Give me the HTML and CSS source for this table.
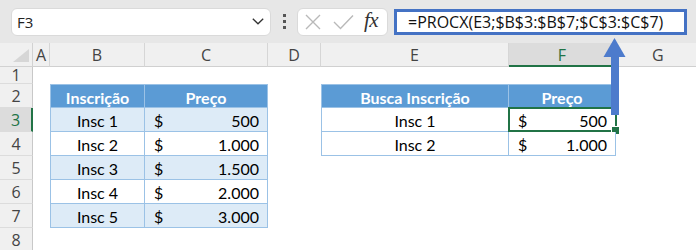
FILE: index.html
```html
<!DOCTYPE html>
<html lang="pt-BR">
<head>
<meta charset="utf-8">
<title>PROCX</title>
<link rel="stylesheet" href="styles.css">
</head>
<body>
<div class="app">
  <div class="formula-bar">
    <div class="name-box">
      <span class="name-ref">F3</span>
      <svg class="chevron" width="12" height="7" viewBox="0 0 12 7"><path d="M0.8 0.8 L6 5.8 L11.2 0.8" fill="none" stroke="#333" stroke-width="1.3"/></svg>
    </div>
    <div class="grip"><i></i><i></i><i></i></div>
    <div class="fx-buttons">
      <svg class="btn-icon" width="16" height="16" viewBox="0 0 16 16"><path d="M1 1 L15 15 M15 1 L1 15" stroke="#b9b9b9" stroke-width="1.4" fill="none"/></svg>
      <svg class="btn-icon" width="21" height="16" viewBox="0 0 21 16"><path d="M1 8 L7.5 14.5 L20 1.5" stroke="#b9b9b9" stroke-width="1.4" fill="none"/></svg>
      <span class="fx">fx</span>
    </div>
    <div class="formula">=PROCX(E3;$B$3:$B$7;$C$3:$C$7)</div>
  </div>

  <div class="sheet">
    <!-- column headers -->
    <div class="corner"><svg width="16" height="13" viewBox="0 0 16 13"><path d="M16 0 L16 13 L0 13 Z" fill="#d6d6d6"/></svg></div>
    <div class="col-hd">A</div>
    <div class="col-hd">B</div>
    <div class="col-hd">C</div>
    <div class="col-hd">D</div>
    <div class="col-hd">E</div>
    <div class="col-hd col-sel">F</div>
    <div class="col-hd col-last">G</div>

    <!-- row 1 -->
    <div class="row-hd">1</div>
    <div></div><div></div><div></div><div></div><div></div><div></div><div></div>

    <!-- row 2 -->
    <div class="row-hd">2</div>
    <div></div>
    <div class="cell t-head first">Inscrição</div>
    <div class="cell t-head">Preço</div>
    <div></div>
    <div class="cell t-head first">Busca Inscrição</div>
    <div class="cell t-head">Preço</div>
    <div></div>

    <!-- row 3 -->
    <div class="row-hd row-sel">3</div>
    <div></div>
    <div class="cell band first">Insc 1</div>
    <div class="cell band num"><span>$</span><span>500</span></div>
    <div></div>
    <div class="cell first">Insc 1</div>
    <div class="cell num active"><span>$</span><span>500</span></div>
    <div></div>

    <!-- row 4 -->
    <div class="row-hd">4</div>
    <div></div>
    <div class="cell first">Insc 2</div>
    <div class="cell num"><span>$</span><span>1.000</span></div>
    <div></div>
    <div class="cell first">Insc 2</div>
    <div class="cell num"><span>$</span><span>1.000</span></div>
    <div></div>

    <!-- row 5 -->
    <div class="row-hd">5</div>
    <div></div>
    <div class="cell band first">Insc 3</div>
    <div class="cell band num"><span>$</span><span>1.500</span></div>
    <div></div><div></div><div></div><div></div>

    <!-- row 6 -->
    <div class="row-hd">6</div>
    <div></div>
    <div class="cell first">Insc 4</div>
    <div class="cell num"><span>$</span><span>2.000</span></div>
    <div></div><div></div><div></div><div></div>

    <!-- row 7 -->
    <div class="row-hd">7</div>
    <div></div>
    <div class="cell band first">Insc 5</div>
    <div class="cell band num"><span>$</span><span>3.000</span></div>
    <div></div><div></div><div></div><div></div>

    <!-- row 8 -->
    <div class="row-hd">8</div>
    <div></div><div></div><div></div><div></div><div></div><div></div><div></div>
  </div>

  <!-- callout arrow from the selected cell up to the formula -->
  <svg class="callout" width="30" height="84" viewBox="0 0 30 84">
    <rect x="11" y="20" width="8" height="60" fill="#4d7bcc"/>
    <path d="M3.5 22 L25.5 22 L14.5 3 Z" fill="#4d7bcc"/>
  </svg>
</div>
</body>
</html>
```

FILE: styles.css
```css
* {
  box-sizing: border-box;
}

html, body {
  margin: 0;
  padding: 0;
  background: #ffffff;
}

.app {
  position: relative;
  width: 696px;
  height: 250px;
  overflow: hidden;
  font-family: "Open Sans", "Noto Sans", sans-serif;
}

/* ---------- formula bar ---------- */
.formula-bar {
  height: 43px;
  background: #e7e7e7;
  display: flex;
  align-items: center;
  padding-left: 11px;
}

.name-box {
  width: 260px;
  height: 28px;
  background: #ffffff;
  border: 1px solid #dadada;
  border-radius: 6px;
  display: flex;
  align-items: center;
  justify-content: space-between;
  padding: 0 6px 0 5px;
  font-size: 15px;
  color: #222;
}

.grip {
  margin-left: 12px;
  width: 3px;
  display: flex;
  flex-direction: column;
  gap: 3px;
}

.grip i {
  display: block;
  width: 3px;
  height: 3px;
  background: #555;
}

.fx-buttons {
  margin-left: 11px;
  width: 91px;
  height: 28px;
  background: #ffffff;
  border: 1px solid #dadada;
  border-radius: 6px;
  display: flex;
  align-items: center;
  padding-left: 7px;
}

.btn-icon + .btn-icon {
  margin-left: 12px;
}

.fx {
  margin-left: 10px;
  font-family: "Liberation Serif", "DejaVu Serif", serif;
  font-style: italic;
  font-size: 21px;
  color: #333;
  letter-spacing: -0.5px;
  line-height: 1;
  padding-bottom: 2px;
}

.formula {
  margin-left: 6px;
  width: 293px;
  height: 26px;
  background: #ffffff;
  border: 3px solid #4472c4;
  display: flex;
  align-items: center;
  padding-left: 11px;
  font-size: 16px;
  color: #111;
  white-space: nowrap;
}

/* ---------- grid ---------- */
.sheet {
  display: grid;
  grid-template-columns: 33px 17px 95px 123px 53px 188px 107px 1fr;
  grid-template-rows: 24px 17px repeat(7, 24px);
}

.corner {
  background: #f0f0f0;
  border-right: 1px solid #d2d2d2;
  border-bottom: 1px solid #d2d2d2;
  display: flex;
  align-items: flex-end;
  justify-content: flex-end;
  padding: 0 3px 4px 0;
}

.corner svg {
  display: block;
}

.col-hd {
  background: #f0f0f0;
  border-right: 1px solid #d6d6d6;
  border-bottom: 1px solid #d0d0d0;
  display: flex;
  align-items: center;
  justify-content: center;
  font-size: 16px;
  color: #444;
  padding-top: 1px;
}

.col-last {
  border-right: none;
  justify-content: flex-start;
  padding-left: 36px;
}

.col-sel {
  background: #dcdcdc;
  color: #217346;
  border-bottom: 2px solid #217346;
}

.row-hd {
  background: #f0f0f0;
  border-right: 1px solid #c8c8c8;
  border-bottom: 1px solid #dcdcdc;
  display: flex;
  align-items: center;
  justify-content: center;
  font-size: 16px;
  color: #444;
}

.row-sel {
  background: #dcdcdc;
  color: #217346;
  border-right: 2px solid #217346;
}

/* ---------- table cells ---------- */
.cell {
  position: relative;
  font-family: Lato, "Liberation Sans", sans-serif;
  font-size: 16px;
  color: #000;
  background: #ffffff;
  border-right: 1px solid #9bc2e6;
  border-bottom: 1px solid #9bc2e6;
  display: flex;
  align-items: center;
  justify-content: center;
  padding-top: 2px;
  white-space: nowrap;
}

.cell.first {
  border-left: 1px solid #9bc2e6;
}

.t-head {
  background: #5b9bd5;
  color: #ffffff;
  font-weight: bold;
  border-top: 1px solid #9bc2e6;
}

.band {
  background: #ddebf7;
}

.num {
  justify-content: space-between;
  padding-left: 9px;
  padding-right: 8px;
}

/* selected cell with its fill handle */
.active::before {
  content: "";
  position: absolute;
  left: -1px;
  top: -1px;
  right: -2px;
  bottom: -1px;
  border: 2px solid #217346;
}

.active::after {
  content: "";
  position: absolute;
  right: -5px;
  bottom: -4px;
  width: 7px;
  height: 7px;
  background: #217346;
  border: 1px solid #ffffff;
}

.callout {
  position: absolute;
  left: 600px;
  top: 35px;
}
```
